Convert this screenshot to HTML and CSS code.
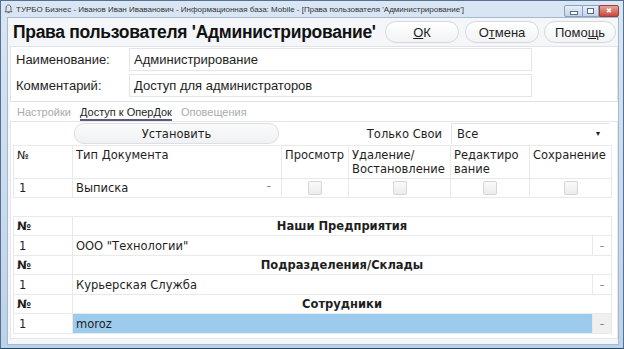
FILE: index.html
```html
<!DOCTYPE html>
<html lang="ru">
<head>
    <meta charset="UTF-8">
    <title>Права пользователя</title>
    <link rel="stylesheet" href="styles.css">
</head>
<body>
<div class="window">
    <div class="titlebar">
        <svg class="appicon" width="9" height="10" viewBox="0 0 9 10">
            <path d="M4.5 1 C2.5 1 2 2.5 2 4.5 L2 6.5 L1 7.8 L8 7.8 L7 6.5 L7 4.5 C7 2.5 6.5 1 4.5 1 Z" fill="none" stroke="#555" stroke-width="0.9"/>
            <path d="M3.6 8.6 L5.4 8.6" stroke="#555" stroke-width="0.9"/>
        </svg>
        <span class="caption">ТУРБО Бизнес - Иванов Иван Иваванович - Информационная база: Mobile - [Права пользователя 'Администрирование']</span>
        <div class="winbtns">
            <span class="wb wb-min"><i></i></span>
            <span class="wb wb-max"><i></i></span>
            <span class="wb wb-close">&#x2716;</span>
        </div>
    </div>
    <div class="client">
        <div class="head">
            <h1>Права пользователя 'Администрирование'</h1>
            <button class="pill"><u>О</u>К</button>
            <button class="pill">О<u>т</u>мена</button>
            <button class="pill pill-help">Помо<u>щ</u>ь</button>
        </div>
        <div class="fields">
            <div class="field">
                <label>Наименование:</label>
                <div class="input">Администрирование</div>
            </div>
            <div class="field">
                <label>Комментарий:</label>
                <div class="input">Доступ для администраторов</div>
            </div>
        </div>
        <div class="tabs">
            <span class="tab">Настройки</span>
            <span class="tab tab-active">Доступ к ОперДок</span>
            <span class="tab">Оповещения</span>
        </div>
        <div class="panel">
            <div class="toolbar">
                <button class="set">Установить</button>
                <span class="only">Только Свои</span>
                <div class="select">Все<span class="arrow">▾</span></div>
            </div>
            <table class="grid docs">
                <colgroup>
                    <col style="width:59px"><col style="width:209px"><col style="width:67px">
                    <col style="width:102px"><col style="width:79px"><col style="width:82px">
                </colgroup>
                <tr class="hdr">
                    <td>№</td>
                    <td>Тип Документа</td>
                    <td>Просмотр</td>
                    <td>Удаление/ Востановление</td>
                    <td>Редактиро вание</td>
                    <td>Сохранение</td>
                </tr>
                <tr class="row">
                    <td>1</td>
                    <td>Выписка<span class="dash">–</span></td>
                    <td class="chk"><span class="box"></span></td>
                    <td class="chk"><span class="box"></span></td>
                    <td class="chk"><span class="box"></span></td>
                    <td class="chk"><span class="box"></span></td>
                </tr>
            </table>
            <table class="grid sect">
                <colgroup>
                    <col style="width:59px"><col style="width:520px"><col style="width:19px">
                </colgroup>
                <tr class="shdr">
                    <td>№</td>
                    <td colspan="2" class="stitle">Наши Предприятия</td>
                </tr>
                <tr class="srow">
                    <td>1</td>
                    <td>ООО "Технологии"</td>
                    <td class="sdash">–</td>
                </tr>
                <tr class="shdr">
                    <td>№</td>
                    <td colspan="2" class="stitle">Подразделения/Склады</td>
                </tr>
                <tr class="srow">
                    <td>1</td>
                    <td>Курьерская Служба</td>
                    <td class="sdash">–</td>
                </tr>
                <tr class="shdr">
                    <td>№</td>
                    <td colspan="2" class="stitle">Сотрудники</td>
                </tr>
                <tr class="srow srow-sel">
                    <td>1</td>
                    <td class="sel">moroz</td>
                    <td class="sdash grey">–</td>
                </tr>
            </table>
        </div>
    </div>
</div>
</body>
</html>
```

FILE: styles.css
```css
body {
    margin: 0;
    font-family: "Liberation Sans", Arial, sans-serif;
    color: #1e1e1e;
}

.window {
    width: 624px;
    height: 349px;
    box-sizing: border-box;
    border: 1px solid #56718f;
    border-bottom-color: #1f4a63;
    background: linear-gradient(#d9e6f4, #bcd2ea);
    padding: 0 4px 3px 6px;
    display: flex;
    flex-direction: column;
}

.titlebar {
    height: 16px;
    display: flex;
    align-items: center;
    margin-left: -3px;
}

.appicon {
    margin: 0 3px 0 0;
}

.caption {
    font-size: 8px;
    color: #333;
    flex: 1;
    white-space: nowrap;
}

.winbtns {
    display: flex;
    align-self: flex-start;
    margin-top: 4px;
}

.wb {
    height: 10px;
    border: 1px solid #8aa2bd;
    background: linear-gradient(#e6eef8, #c2d3e8);
    display: flex;
    align-items: center;
    justify-content: center;
}

.wb-min {
    width: 17px;
    border-radius: 2px 0 0 2px;
}

.wb-min i {
    width: 6px;
    height: 2px;
    background: #fff;
    border: 1px solid #5a6d84;
    margin-top: 4px;
}

.wb-max {
    width: 15px;
    border-left: none;
}

.wb-max i {
    width: 5px;
    height: 4px;
    border: 1px solid #5a6d84;
    background: #fff;
}

.wb-close {
    width: 18px;
    border: 1px solid #93413a;
    border-radius: 0 2px 2px 0;
    background: linear-gradient(#e9a49a, #c8473b);
    color: #fff;
    font-size: 7px;
}

.client {
    flex: 1;
    background: #f4f6f9;
    border: 1px solid #a6b9cf;
    display: flex;
    flex-direction: column;
}

.head {
    height: 28px;
    display: flex;
    align-items: center;
    padding: 0 2px 0 5px;
}

.head h1 {
    flex: 1;
    min-width: 0;
    margin: 0;
    font-size: 17.5px;
    letter-spacing: -0.3px;
    white-space: nowrap;
    font-weight: bold;
    color: #111;
}

.pill {
    width: 74px;
    height: 22px;
    margin-left: 6px;
    border: 1px solid #d6d9de;
    border-radius: 11px;
    background: linear-gradient(#ffffff, #f2f3f5);
    font-family: "Liberation Sans", Arial, sans-serif;
    font-size: 13px;
    color: #1e1e1e;
    padding: 0;
    flex: none;
}

.pill-help {
    width: 72px;
    margin-left: 5px;
}

.fields {
    height: 53px;
    margin: 0 0 0 2px;
    background: #fff;
    border: 1px solid #dfe3e8;
    padding: 1px 0 0 5px;
}

.field {
    display: flex;
    align-items: center;
    margin-bottom: 3px;
}

.field label {
    width: 113px;
    font-size: 13px;
}

.input {
    width: 397px;
    height: 21px;
    line-height: 21px;
    border: 1px solid #e3e5e9;
    padding-left: 4px;
    font-size: 13px;
}

.tabs {
    height: 19px;
    display: flex;
    align-items: flex-end;
    gap: 9px;
    padding-left: 7px;
    margin-left: 2px;
    background: #fff;
    font-size: 11px;
}

.tab {
    color: #a9abae;
    padding-bottom: 3px;
}

.tab-active {
    color: #1e1e1e;
    border-bottom: 2px solid #5e5a7c;
    padding-bottom: 1px;
}

.panel {
    flex: 1;
    margin: 0 0 5px 2px;
    background: #fff;
    border: 1px solid #e4e7eb;
    padding: 1px 0 0 1px;
    font-family: "DejaVu Sans", Verdana, sans-serif;
    font-size: 11.5px;
}

.toolbar {
    height: 21px;
    display: flex;
    align-items: center;
    margin-bottom: 1px;
}

.set {
    width: 205px;
    height: 21px;
    margin-left: 62px;
    border: 1px solid #dcdfe3;
    border-radius: 10px;
    background: linear-gradient(#fbfbfc, #eff1f3);
    font-family: "DejaVu Sans", Verdana, sans-serif;
    font-size: 11.5px;
    color: #1e1e1e;
    padding: 0;
}

.only {
    margin-left: auto;
    margin-right: 9px;
}

.select {
    width: 152px;
    height: 20px;
    line-height: 20px;
    padding-left: 5px;
    margin-right: 8px;
    border-top: 1px solid #e3e3e3;
    border-left: 1px solid #e3e3e3;
    position: relative;
}

.arrow {
    position: absolute;
    right: 9px;
    top: 0;
    font-size: 8px;
}

.grid {
    border-collapse: collapse;
    table-layout: fixed;
    width: 598px;
    margin-left: 1px;
}

.grid td {
    border: 1px solid #e8e9eb;
    padding: 0 3px;
    overflow: hidden;
}

.docs .hdr td {
    height: 30px;
    vertical-align: top;
    padding-top: 2px;
    line-height: 14px;
}

.docs .row td {
    height: 18px;
}

.docs .row td:first-child {
    padding-left: 5px;
}

.dash {
    float: right;
    color: #555;
    font-size: 9px;
    margin-right: 7px;
}

.chk {
    text-align: center;
    vertical-align: middle;
}

.box {
    display: inline-block;
    width: 12px;
    height: 12px;
    border: 1px solid #d4d6d9;
    border-radius: 2px;
    background: linear-gradient(#fafafa, #ececec);
    vertical-align: middle;
}

.sect {
    margin-top: 18px;
}

.shdr td {
    height: 18px;
    font-weight: bold;
}

.stitle {
    text-align: center;
}

.srow td {
    height: 19px;
}

.srow td:first-child {
    padding-left: 5px;
}

.sdash {
    text-align: center;
    font-size: 9px;
    color: #555;
}

.sel {
    background: #9ccbee;
    border-color: #86b6dc;
}

.grey {
    background: #f0f0f0;
}
```
